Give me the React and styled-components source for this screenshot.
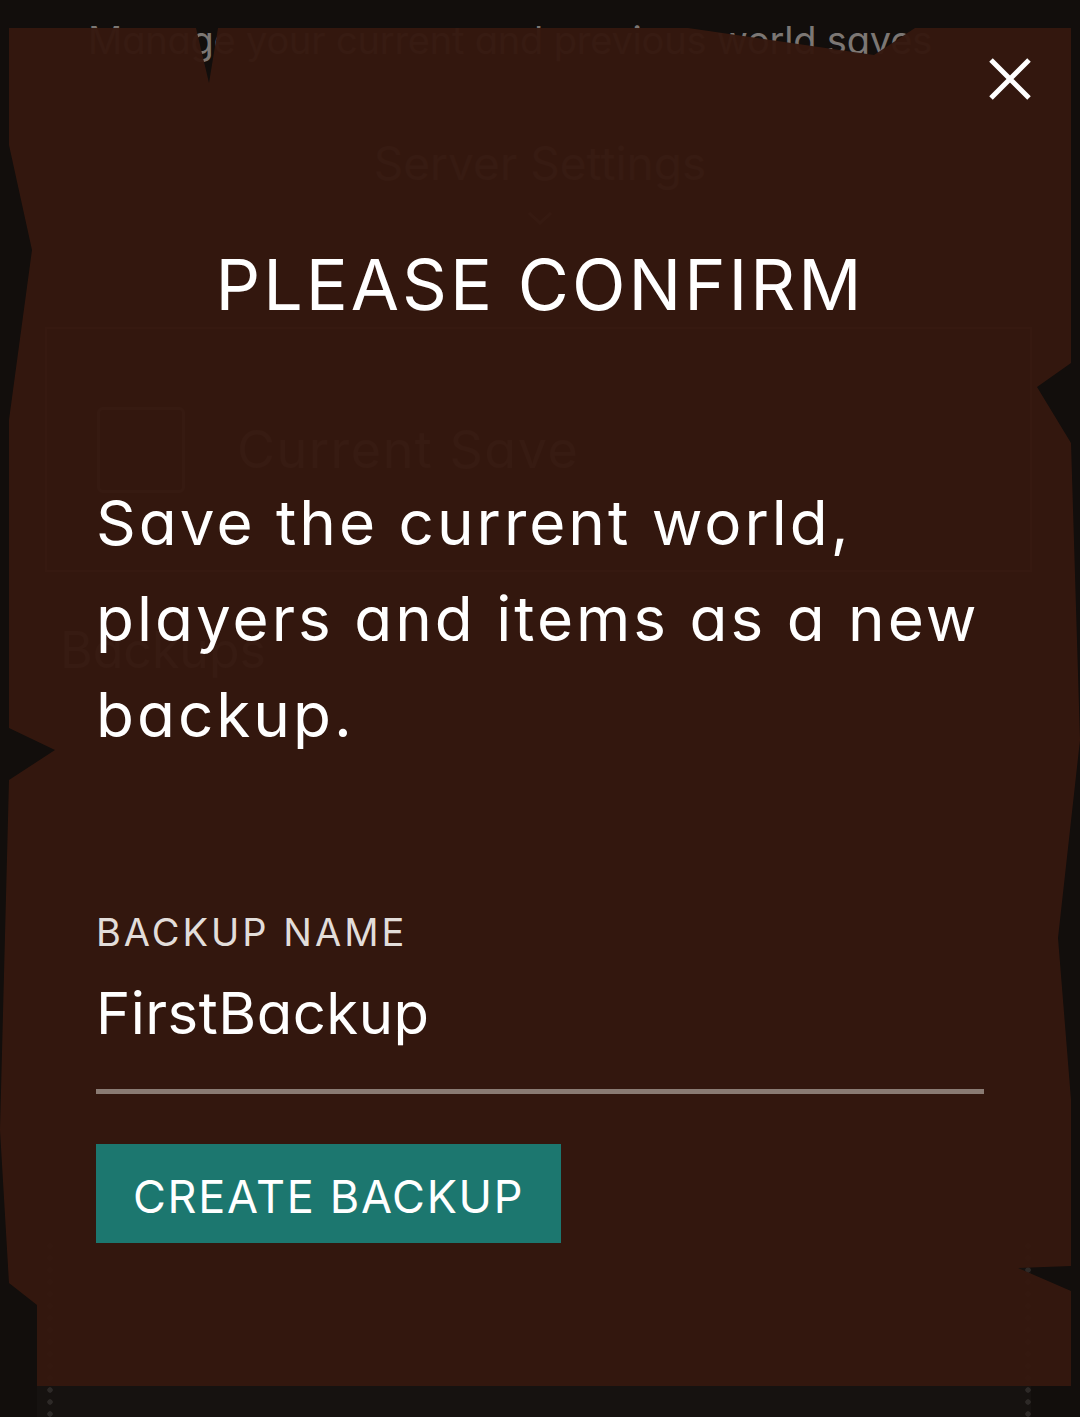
import React from "react";
import styled, { createGlobalStyle } from "styled-components";

const GlobalStyle = createGlobalStyle`
  html, body {
    margin: 0;
    padding: 0;
    background: #120e0c;
  }
  body {
    font-family: Inter, "Noto Sans", "Liberation Sans", sans-serif;
    font-feature-settings: "cv11" 1;
    -webkit-font-smoothing: antialiased;
  }
  * { box-sizing: border-box; }
`;

const Page = styled.div`
  position: relative;
  width: 1080px;
  height: 1417px;
  overflow: hidden;
  background: #120e0c;
  color: #7a7572;
`;

const Intro = styled.p`
  margin: 0;
  padding: 14px 0 0 88px;
  font-size: 38px;
  line-height: 53px;
  letter-spacing: -0.2px;
  white-space: nowrap;
  color: #7c7774;
`;

const SectionTitle = styled.h2`
  margin: 68px 0 0;
  text-align: center;
  font-size: 46px;
  font-weight: 400;
  line-height: 56px;
  color: #7a7572;
`;

const ChevronRow = styled.div`
  display: flex;
  justify-content: center;
  margin-top: 18px;
  color: #6a6360;
`;

const SaveCard = styled.div`
  margin: 100px 48px 0 45px;
  height: 245px;
  border: 2px solid #5a5350;
  display: flex;
  align-items: center;
  gap: 52px;
  padding: 0 50px;
`;

const SaveIcon = styled.div`
  width: 88px;
  height: 86px;
  border: 3px solid #6a6360;
  border-radius: 6px;
`;

const SaveLabel = styled.span`
  font-size: 52px;
  letter-spacing: 1.5px;
  color: #7a7572;
`;

const BackupsTitle = styled.h3`
  margin: 48px 0 0 60px;
  font-size: 50px;
  font-weight: 400;
  line-height: 60px;
  color: #7a7572;
`;

const Timeline = styled.div`
  margin: 0 49px 0 37px;
  position: absolute;
  top: 1240px;
  left: 0;
  right: 0;
  bottom: 0;
  background:
    radial-gradient(circle, #2d2927 2.4px, transparent 3px) 10px 0 / 6px 12px repeat-y,
    radial-gradient(circle, #2d2927 2.4px, transparent 3px) right 0 top 0 / 6px 12px repeat-y,
    #161210;
`;

const Modal = styled.div`
  position: absolute;
  top: 28px;
  left: 0;
  width: 1080px;
  height: 1358px;
  background: rgba(53, 24, 14, 0.97);
  clip-path: polygon(
    9px 0, 196px 0, 209px 55px, 218px 0, 688px 0, 874px 27px, 915px 0, 1071px 0,
    1071px 335px, 1037px 359px, 1071px 415px, 1080px 712px, 1058px 910px,
    1067px 1022px, 1071px 1072px, 1071px 1238px, 1018px 1240px, 1071px 1263px,
    1071px 1358px, 37px 1358px, 37px 1277px, 9px 1255px, 0 1102px, 9px 752px,
    55px 722px, 9px 700px, 9px 392px, 32px 222px, 9px 117px
  );
  padding: 222px 96px 0;
  display: flex;
  flex-direction: column;
  color: #ffffff;
`;

const CloseButton = styled.button`
  position: absolute;
  top: 29px;
  right: 48px;
  width: 44px;
  height: 44px;
  padding: 0;
  border: none;
  background: none;
  color: #ffffff;
  display: flex;
  align-items: center;
  justify-content: center;
`;

const Title = styled.h1`
  margin: 0;
  font-size: 70px;
  line-height: 70px;
  font-weight: 400;
  letter-spacing: 3px;
  text-align: center;
  white-space: nowrap;
`;

const Message = styled.p`
  margin: 155px 0 0;
  font-size: 62px;
  line-height: 96px;
  letter-spacing: 3px;
  white-space: nowrap;
`;

const FieldLabel = styled.label`
  display: block;
  margin-top: 146px;
  font-size: 38px;
  line-height: 46px;
  letter-spacing: 3px;
  color: #e2ddda;
`;

const FieldInput = styled.input`
  display: block;
  margin-top: 23px;
  width: 100%;
  height: 116px;
  padding: 0 0 41px;
  border: none;
  border-bottom: 5px solid #8a7b73;
  border-radius: 0;
  background: transparent;
  color: #ffffff;
  font-family: inherit;
  font-feature-settings: "cv11" 1;
  font-size: 58px;
  line-height: 70px;
  letter-spacing: 0.5px;
  outline: none;
`;

const PrimaryButton = styled.button`
  align-self: flex-start;
  margin-top: 50px;
  height: 99px;
  padding: 6px 37px 0;
  border: none;
  background: #1c776f;
  color: #ffffff;
  font-family: inherit;
  font-feature-settings: "cv11" 1;
  font-size: 45px;
  letter-spacing: 1.7px;
  white-space: nowrap;
`;

export default function App() {
  return (
    <>
      <GlobalStyle />
      <Page>
        <Intro>Manage your current and previous world saves</Intro>
        <SectionTitle>Server Settings</SectionTitle>
        <ChevronRow>
          <svg width="28" height="18" viewBox="0 0 28 18" fill="none" stroke="currentColor" strokeWidth="3">
            <path d="M3 4l11 10L25 4" />
          </svg>
        </ChevronRow>
        <SaveCard>
          <SaveIcon />
          <SaveLabel>Current Save</SaveLabel>
        </SaveCard>
        <BackupsTitle>Backups</BackupsTitle>
        <Timeline />

        <Modal role="dialog" aria-modal="true">
          <CloseButton aria-label="Close">
            <svg width="44" height="44" viewBox="0 0 44 44" fill="none" stroke="currentColor" strokeWidth="5">
              <path d="M3 3L41 41M41 3L3 41" />
            </svg>
          </CloseButton>
          <Title>PLEASE CONFIRM</Title>
          <Message>
            Save the current world,
            <br />
            players and items as a new
            <br />
            backup.
          </Message>
          <FieldLabel htmlFor="backup-name">BACKUP NAME</FieldLabel>
          <FieldInput id="backup-name" readOnly value="FirstBackup" />
          <PrimaryButton>CREATE BACKUP</PrimaryButton>
        </Modal>
      </Page>
    </>
  );
}
